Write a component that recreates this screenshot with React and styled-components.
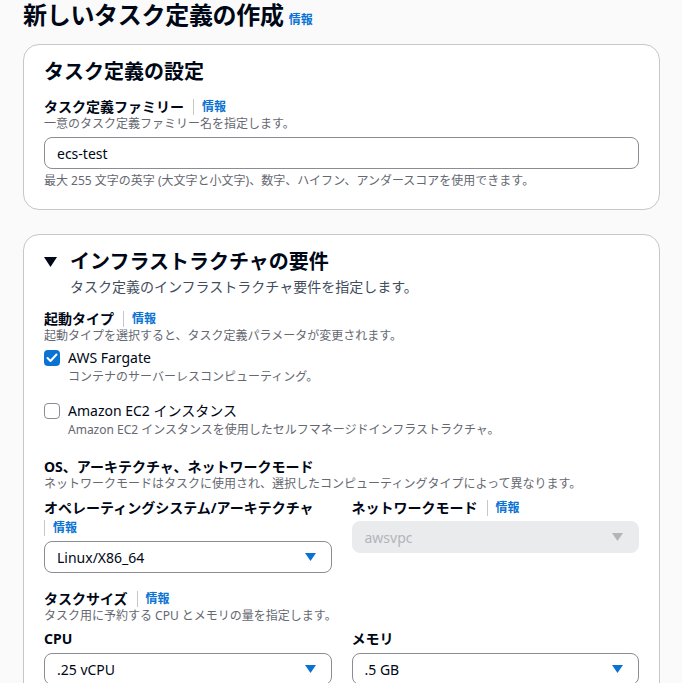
import React from 'react';
import styled, {createGlobalStyle} from 'styled-components';

const GlobalStyle = createGlobalStyle`
    body {
        margin: 0;
        background: #fafafa;
        font-family: "Noto Sans", "Noto Sans CJK JP", sans-serif;
        color: #000716;
    }
`

const Page = styled.div`
    padding: 0 22px 40px 23px;
`

const TitleRow = styled.div`
    display: flex;
    align-items: baseline;
    gap: 5px;
    height: 30px;
`

const Title = styled.h1`
    margin: 0;
    font-size: 24px;
    line-height: 30px;
    font-weight: 700;
    letter-spacing: -0.3px;
`

const InfoLink = styled.a`
    color: #0972d3;
    font-size: 12px;
    font-weight: 700;
    text-decoration: none;
`

const Card = styled.section`
    margin-top: ${props => props.$top}px;
    background: #fff;
    border: 1px solid #c6c6cd;
    border-radius: 16px;
    padding: 15px 20px 20px 20px;
`

const CardTitle = styled.h2`
    margin: 0;
    display: flex;
    align-items: center;
    gap: 13px;
    font-size: 20px;
    line-height: 24px;
    font-weight: 700;
`

const CardDesc = styled.p`
    margin: 3px 0 0 26px;
    font-size: 14px;
    line-height: 20px;
    color: #414d5c;
`

const Label = styled.div`
    margin-top: ${props => props.$top || 0}px;
    font-size: 14px;
    line-height: ${props => props.$lh || 18}px;
    font-weight: 700;
`

const LabelText = styled.span`
    padding-right: 9px;
`

const Info = styled.span`
    display: inline-block;
    border-left: 1px solid #c6c6cd;
    padding-left: 8px;
    line-height: 16px;
    font-size: 12px;
    color: #0972d3;
    vertical-align: 1px;
`

const Hint = styled.div`
    margin: ${props => props.$top || 0}px 0 0 ${props => props.$indent || 0}px;
    font-size: 12px;
    line-height: 16px;
    color: #656871;
`

const Input = styled.div`
    margin-top: 5px;
    height: 32px;
    box-sizing: border-box;
    border: 1px solid #8c8c94;
    border-radius: 8px;
    padding: 0 12px;
    display: flex;
    align-items: center;
    font-size: 14px;
`

const Option = styled.label`
    margin-top: ${props => props.$top}px;
    display: flex;
    align-items: center;
    gap: 8px;
    font-size: 14px;
    line-height: 22px;
`

const Box = styled.span`
    width: 16px;
    height: 16px;
    box-sizing: border-box;
    border-radius: 4px;
    border: ${props => props.$checked ? 'none' : '1.5px solid #8c8c94'};
    background: ${props => props.$checked ? '#0972d3' : '#fff'};
    display: flex;
    align-items: center;
    justify-content: center;
`

const Columns = styled.div`
    margin-top: 6px;
    display: grid;
    grid-template-columns: 1fr 1fr;
    column-gap: 20px;
`

const Select = styled.div`
    margin-top: ${props => props.$top}px;
    height: 32px;
    box-sizing: border-box;
    border: 1px solid ${props => props.$disabled ? '#e9ebed' : '#8c8c94'};
    background: ${props => props.$disabled ? '#e9ebed' : '#fff'};
    color: ${props => props.$disabled ? '#b4b4bb' : '#000716'};
    border-radius: 8px;
    padding: 0 15px 0 12px;
    display: flex;
    align-items: center;
    justify-content: space-between;
    font-size: 14px;
`

const Caret = ({color}) => (
    <svg width="11" height="8" viewBox="0 0 11 8">
        <path d="M0 0 H11 L5.5 8 Z" fill={color} />
    </svg>
)

const Check = () => (
    <svg width="12" height="10" viewBox="0 0 12 10">
        <path d="M1.5 5 L4.5 8 L10.5 1.5" fill="none" stroke="#fff" strokeWidth="2" strokeLinecap="round" strokeLinejoin="round" />
    </svg>
)

export default function App() {
    return (
        <Page>
            <GlobalStyle />
            <TitleRow>
                <Title>新しいタスク定義の作成</Title>
                <InfoLink>情報</InfoLink>
            </TitleRow>

            <Card $top={14}>
                <CardTitle>タスク定義の設定</CardTitle>
                <Label $top={14}><LabelText>タスク定義ファミリー</LabelText><Info>情報</Info></Label>
                <Hint>一意のタスク定義ファミリー名を指定します。</Hint>
                <Input>ecs-test</Input>
                <Hint $top={4}>最大 255 文字の英字 (大文字と小文字)、数字、ハイフン、アンダースコアを使用できます。</Hint>
            </Card>

            <Card $top={24}>
                <CardTitle>
                    <svg width="13" height="10" viewBox="0 0 13 10">
                        <path d="M0 0 H13 L6.5 10 Z" fill="#000716" />
                    </svg>
                    インフラストラクチャの要件
                </CardTitle>
                <CardDesc>タスク定義のインフラストラクチャ要件を指定します。</CardDesc>

                <Label $top={13}><LabelText>起動タイプ</LabelText><Info>情報</Info></Label>
                <Hint>起動タイプを選択すると、タスク定義パラメータが変更されます。</Hint>
                <Option $top={3}><Box $checked><Check /></Box>AWS Fargate</Option>
                <Hint $indent={24}>コンテナのサーバーレスコンピューティング。</Hint>
                <Option $top={15}><Box />Amazon EC2 インスタンス</Option>
                <Hint $indent={24}>Amazon EC2 インスタンスを使用したセルフマネージドインフラストラクチャ。</Hint>

                <Label $top={20}>OS、アーキテクチャ、ネットワークモード</Label>
                <Hint>ネットワークモードはタスクに使用され、選択したコンピューティングタイプによって異なります。</Hint>
                <Columns>
                    <div>
                        <Label $lh={20}><LabelText>オペレーティングシステム/アーキテクチャ</LabelText><Info>情報</Info></Label>
                        <Select $top={3}>Linux/X86_64<Caret color="#0972d3" /></Select>
                    </div>
                    <div>
                        <Label $lh={20}><LabelText>ネットワークモード</LabelText><Info>情報</Info></Label>
                        <Select $top={3} $disabled>awsvpc<Caret color="#b4b4bb" /></Select>
                    </div>
                </Columns>

                <Label $top={17}><LabelText>タスクサイズ</LabelText><Info>情報</Info></Label>
                <Hint>タスク用に予約する CPU とメモリの量を指定します。</Hint>
                <Columns>
                    <div>
                        <Label>CPU</Label>
                        <Select $top={5}>.25 vCPU<Caret color="#0972d3" /></Select>
                    </div>
                    <div>
                        <Label>メモリ</Label>
                        <Select $top={5}>.5 GB<Caret color="#0972d3" /></Select>
                    </div>
                </Columns>
            </Card>
        </Page>
    );
}
